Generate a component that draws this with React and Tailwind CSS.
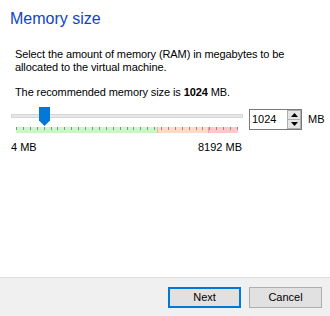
import React from "react";

const ticks = Array.from({ length: 33 });

function Thumb() {
  return (
    <svg width="11" height="19" viewBox="0 0 11 19" className="block">
      <polygon points="0,0 11,0 11,13.5 5.5,19 0,13.5" fill="#0078d7" />
    </svg>
  );
}

function SpinArrows() {
  return (
    <div className="flex flex-col w-[14px] h-[19px] border border-[#adadad] bg-[#e5e5e5]">
      <div className="flex-1 flex items-center justify-center border-b border-[#adadad]">
        <svg width="7" height="4" viewBox="0 0 7 4">
          <polygon points="3.5,0 7,4 0,4" fill="#000" />
        </svg>
      </div>
      <div className="flex-1 flex items-center justify-center">
        <svg width="7" height="4" viewBox="0 0 7 4">
          <polygon points="0,0 7,0 3.5,4" fill="#000" />
        </svg>
      </div>
    </div>
  );
}

export default function App() {
  return (
    <div
      className="w-[330px] h-[316px] bg-white flex flex-col text-[11px] text-black"
      style={{ fontFamily: '"Liberation Sans", Arial, sans-serif' }}
    >
      <div className="flex-1 flex flex-col">
        {/* Title */}
        <h1 className="pt-[9px] pl-[10px] text-[16px] leading-[20px] text-[#0f45c4]">
          Memory size
        </h1>

        {/* Description */}
        <p className="mt-[19px] px-[15px] leading-[13px] tracking-[-0.1px]">
          Select the amount of memory (RAM) in megabytes to be allocated to the virtual machine.
        </p>
        <p className="mt-3 px-[15px] leading-[13px] tracking-[-0.1px]">
          The recommended memory size is <b>1024</b> MB.
        </p>

        {/* Slider + spinbox */}
        <div className="mt-2 flex items-start pl-[11px]">
          <div className="w-[232px] flex flex-col">
            <div className="relative h-[20px]">
              <div className="mt-[7px] h-[4px] bg-[#e7e7e7] border border-[#d6d6d6]" />
              <div className="absolute top-0 left-[28px]">
                <Thumb />
              </div>
            </div>
            <div className="relative ml-[5px] w-[222px] h-[6px] flex">
              <div className="w-[141px] bg-[#c8f8c6]" />
              <div className="w-[51px] bg-[#ffd9c6] border-l border-[#f0b49a]" />
              <div className="flex-1 bg-[#ffc8c8] border-l border-[#eea0a0]" />
              <div className="absolute inset-0 flex justify-between">
                {ticks.map((_, i) => (
                  <div key={i} className="w-px h-[3px] bg-[#8c8c8c]" />
                ))}
              </div>
            </div>
            <div className="mt-[8px] flex justify-between leading-[13px]">
              <span>4 MB</span>
              <span className="pr-px">8192 MB</span>
            </div>
          </div>

          <div className="ml-[6px] mt-[2px] flex items-center">
            <div className="w-[53px] h-[21px] border border-[#7a7a7a] bg-white flex items-center justify-between pl-[2px]">
              <span className="leading-[13px]">1024</span>
              <SpinArrows />
            </div>
            <span className="ml-[6px] leading-[13px]">MB</span>
          </div>
        </div>
      </div>

      {/* Footer */}
      <div className="h-[39px] border-t border-[#dfdfdf] bg-[#f0f0f0] flex justify-end items-start gap-2 pt-[9px] pr-2">
        <button className="w-[73px] h-[21px] bg-[#e1e1e1] border-2 border-[#0078d7] leading-[13px]">
          Next
        </button>
        <button className="w-[73px] h-[21px] bg-[#e1e1e1] border border-[#adadad] leading-[13px]">
          Cancel
        </button>
      </div>
    </div>
  );
}
